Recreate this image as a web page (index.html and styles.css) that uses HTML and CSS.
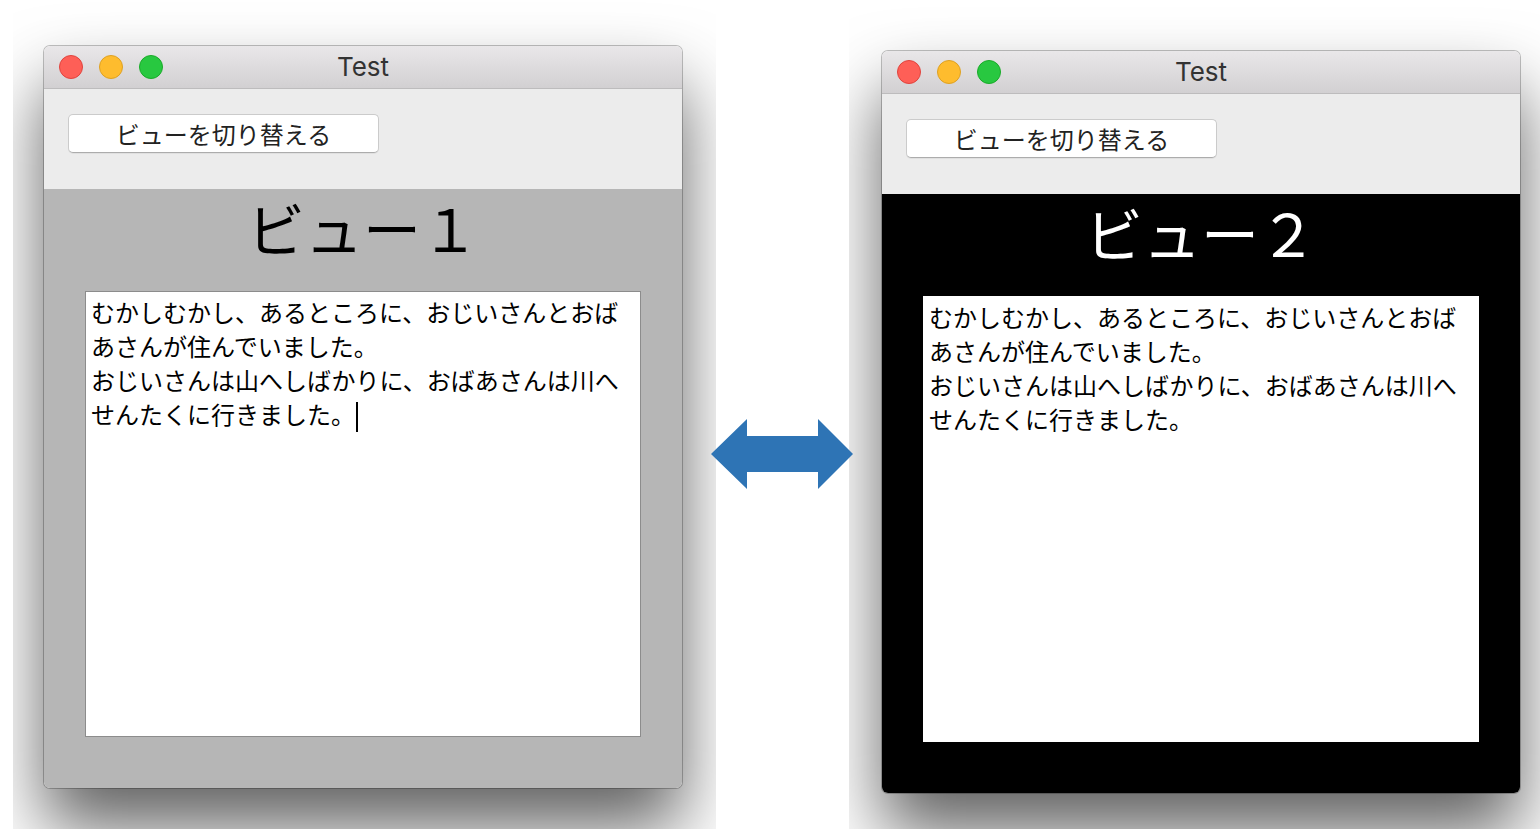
FILE: index.html
```html
<!DOCTYPE html>
<html lang="ja">
<head>
<meta charset="utf-8">
<title>Test</title>
<link rel="stylesheet" href="styles.css">
</head>
<body>
<div class="stage">
  <div class="shot shot-left">
    <div class="window">
      <div class="titlebar">
        <div class="lights">
          <span class="light red"></span>
          <span class="light yellow"></span>
          <span class="light green"></span>
        </div>
        <div class="title">Test</div>
        <div></div>
      </div>
      <div class="toolbar">
        <button class="btn">ビューを切り替える</button>
      </div>
      <div class="content gray">
        <h1 class="view-title">ビュー１</h1>
        <div class="textarea">むかしむかし、あるところに、おじいさんとおば<br>あさんが住んでいました。<br>おじいさんは山へしばかりに、おばあさんは川へ<br>せんたくに行きました。<span class="caret"></span></div>
      </div>
    </div>
  </div>
  <div class="gap">
    <svg class="arrow" viewBox="0 0 142 70" width="142" height="70">
      <path d="M0 35 L36 0 L36 17 L107 17 L107 0 L142 35 L107 70 L107 53 L36 53 L36 70 Z" fill="#2e74b5"/>
    </svg>
  </div>
  <div class="shot shot-right">
    <div class="window">
      <div class="titlebar">
        <div class="lights">
          <span class="light red"></span>
          <span class="light yellow"></span>
          <span class="light green"></span>
        </div>
        <div class="title">Test</div>
        <div></div>
      </div>
      <div class="toolbar">
        <button class="btn">ビューを切り替える</button>
      </div>
      <div class="content black">
        <h1 class="view-title light-text">ビュー２</h1>
        <div class="textarea plain">むかしむかし、あるところに、おじいさんとおば<br>あさんが住んでいました。<br>おじいさんは山へしばかりに、おばあさんは川へ<br>せんたくに行きました。</div>
      </div>
    </div>
  </div>
</div>
</body>
</html>
```

FILE: styles.css
```css
html, body {
  margin: 0;
  padding: 0;
}

body {
  height: 829px;
  overflow: hidden;
  background: #fff;
  font-family: "Noto Sans CJK JP", "Noto Sans", sans-serif;
}

.stage {
  display: flex;
  height: 829px;
  padding-left: 13px;
}

.shot {
  flex: none;
  height: 829px;
  overflow: hidden;
  background: #fff;
  box-sizing: border-box;
}

.shot-left {
  width: 703px;
  padding: 46px 0 0 31px;
}

.shot-right {
  flex: 1;
  padding: 51px 0 0 33px;
}

.gap {
  flex: none;
  width: 133px;
  box-sizing: border-box;
  padding-top: 419px;
  position: relative;
  z-index: 1;
}

.arrow {
  display: block;
  width: 142px;
  height: 70px;
  margin-left: -5px;
}

.window {
  width: 638px;
  border-radius: 6px;
  overflow: hidden;
  box-shadow: 0 0 0 1px rgba(0, 0, 0, 0.24), 0 40px 70px rgba(0, 0, 0, 0.62);
}

.titlebar {
  height: 42px;
  border-bottom: 1px solid #bdbcbd;
  background: linear-gradient(#e9e7e9, #d2d0d2);
  display: grid;
  grid-template-columns: 1fr auto 1fr;
  align-items: center;
}

.lights {
  display: flex;
  gap: 16px;
  padding-left: 15px;
}

.light {
  width: 22px;
  height: 22px;
  border-radius: 50%;
  border: 1px solid;
}

.red {
  background: #fe5f57;
  border-color: #e0443e;
}

.yellow {
  background: #febc2e;
  border-color: #dea123;
}

.green {
  background: #28c840;
  border-color: #1aab29;
}

.title {
  font-family: "Inter", "Noto Sans", sans-serif;
  font-size: 26px;
  color: #333;
  line-height: 42px;
}

.toolbar {
  height: 100px;
  box-sizing: border-box;
  background: #ececec;
  padding: 25px 0 0 24px;
}

.btn {
  display: block;
  width: 311px;
  height: 39px;
  box-sizing: border-box;
  padding: 0;
  background: #fff;
  border: 1px solid #cbcbcb;
  border-bottom-color: #acacac;
  border-radius: 5px;
  box-shadow: 0 1px 0 rgba(0, 0, 0, 0.05);
  font-family: "Noto Sans CJK JP", sans-serif;
  font-size: 24px;
  line-height: 35px;
  color: #222;
  text-align: center;
}

.content {
  height: 599px;
}

.gray {
  background: #b6b6b6;
}

.black {
  background: #000;
}

.view-title {
  margin: 0;
  height: 76px;
  line-height: 76px;
  font-size: 58px;
  font-weight: 400;
  color: #000;
  text-align: center;
}

.light-text {
  color: #fff;
}

.textarea {
  margin: 26px 0 0 41px;
  width: 556px;
  height: 446px;
  box-sizing: border-box;
  background: #fff;
  border: 1px solid #8c8c8c;
  padding: 3px 6px 3px 5px;
  font-size: 24px;
  line-height: 34px;
  color: #000;
  white-space: nowrap;
}

.textarea.plain {
  border-color: #fff;
}

.caret {
  display: inline-block;
  width: 2px;
  height: 30px;
  background: #000;
  vertical-align: middle;
  margin-left: 1px;
}
```
